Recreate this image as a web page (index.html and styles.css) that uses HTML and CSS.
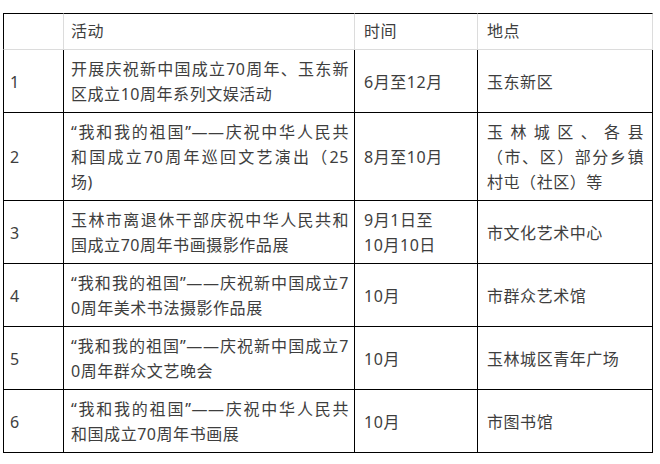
FILE: index.html
```html
<!DOCTYPE html>
<html lang="zh-CN">
<head>
<meta charset="utf-8">
<title>活动安排</title>
<link rel="stylesheet" href="styles.css">
</head>
<body>
<div class="table">
  <div class="cell head c0 first"></div>
  <div class="cell head c1">活动</div>
  <div class="cell head c2">时间</div>
  <div class="cell head c3 last">地点</div>

  <div class="cell c0 first">1</div>
  <div class="cell c1"><span class="jl">开展庆祝新中国成立70周年、玉东新</span><span>区成立10周年系列文娱活动</span></div>
  <div class="cell c2">6月至12月</div>
  <div class="cell c3">玉东新区</div>

  <div class="cell c0 first">2</div>
  <div class="cell c1"><span class="jl">“我和我的祖国”——庆祝中华人民共</span><span class="jl">和国成立70周年巡回文艺演出（25</span><span>场)</span></div>
  <div class="cell c2">8月至10月</div>
  <div class="cell c3"><span class="jl">玉林城区、各县</span><span class="jl">（市、区）部分乡镇</span><span>村屯（社区）等</span></div>

  <div class="cell c0 first">3</div>
  <div class="cell c1"><span class="jl">玉林市离退休干部庆祝中华人民共和</span><span>国成立70周年书画摄影作品展</span></div>
  <div class="cell c2"><span>9月1日至</span><span>10月10日</span></div>
  <div class="cell c3">市文化艺术中心</div>

  <div class="cell c0 first">4</div>
  <div class="cell c1"><span class="jl">“我和我的祖国”——庆祝新中国成立7</span><span>0周年美术书法摄影作品展</span></div>
  <div class="cell c2">10月</div>
  <div class="cell c3">市群众艺术馆</div>

  <div class="cell c0 first">5</div>
  <div class="cell c1"><span class="jl">“我和我的祖国”——庆祝新中国成立7</span><span>0周年群众文艺晚会</span></div>
  <div class="cell c2">10月</div>
  <div class="cell c3">玉林城区青年广场</div>

  <div class="cell c0 first">6</div>
  <div class="cell c1"><span class="jl">“我和我的祖国”——庆祝中华人民共</span><span>和国成立70周年书画展</span></div>
  <div class="cell c2">10月</div>
  <div class="cell c3">市图书馆</div>
</div>
</body>
</html>
```
FILE: styles.css
```css
body {
  margin: 0;
  background: #fff;
  font-family: "Noto Sans", "Noto Sans CJK SC", sans-serif;
  font-size: 16px;
  letter-spacing: 0.544px;
  color: #3e3e3e;
}

.table {
  display: grid;
  grid-template-columns: 61px 291px 123px 175px;
  width: 650px;
  margin: 13px 0 0 3px;
}

.cell {
  box-sizing: border-box;
  display: flex;
  flex-direction: column;
  justify-content: center;
  border-right: 1px solid #000;
  border-bottom: 1px solid #000;
  padding: 7px 9px 5px;
  line-height: 25px;
  white-space: nowrap;
}

.cell span {
  display: block;
}

.cell .jl {
  text-align: justify;
  text-align-last: justify;
}

.first {
  border-left: 1px solid #000;
}

.head {
  border-top: 1px solid #000;
  border-right-color: #dcdcdc;
  border-bottom-color: #dcdcdc;
  padding-top: 5px;
  padding-bottom: 5px;
}

.c0 {
  padding-left: 6px;
}

.c1 {
  padding-left: 7px;
  padding-right: 5px;
}

.c2 {
  padding-left: 9px;
}

.c3 {
  padding-left: 9px;
  padding-right: 8px;
}
```
